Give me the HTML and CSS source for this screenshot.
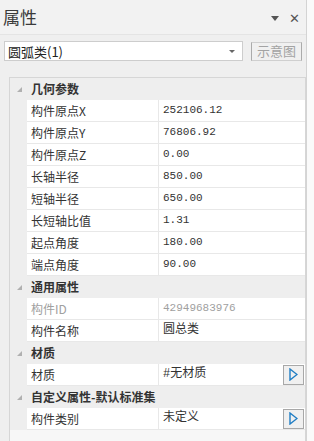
FILE: index.html
```html
<!DOCTYPE html>
<html lang="zh-CN">
<head>
    <meta charset="UTF-8">
    <meta name="viewport" content="width=device-width, initial-scale=1.0">
    <title>属性</title>
    <link rel="stylesheet" href="styles.css">
</head>
<body>
    <div class="panel">
        <div class="titlebar">
            <span class="title">属性</span>
            <span class="pin"></span>
            <span class="close">✕</span>
        </div>

        <div class="toolbar">
            <div class="combo">
                <span>圆弧类(1)</span>
                <span class="arrow"></span>
            </div>
            <button class="btn" disabled>示意图</button>
        </div>

        <div class="grid">
            <div class="row cat"><span class="gutter"><i class="tri"></i></span><span class="cell span">几何参数</span></div>
            <div class="row"><span class="gutter"></span><span class="cell label">构件原点X</span><span class="cell value">252106.12</span></div>
            <div class="row"><span class="gutter"></span><span class="cell label">构件原点Y</span><span class="cell value">76806.92</span></div>
            <div class="row"><span class="gutter"></span><span class="cell label">构件原点Z</span><span class="cell value">0.00</span></div>
            <div class="row"><span class="gutter"></span><span class="cell label">长轴半径</span><span class="cell value">850.00</span></div>
            <div class="row"><span class="gutter"></span><span class="cell label">短轴半径</span><span class="cell value">650.00</span></div>
            <div class="row"><span class="gutter"></span><span class="cell label">长短轴比值</span><span class="cell value">1.31</span></div>
            <div class="row"><span class="gutter"></span><span class="cell label">起点角度</span><span class="cell value">180.00</span></div>
            <div class="row"><span class="gutter"></span><span class="cell label">端点角度</span><span class="cell value">90.00</span></div>

            <div class="row cat"><span class="gutter"><i class="tri"></i></span><span class="cell span">通用属性</span></div>
            <div class="row disabled"><span class="gutter"></span><span class="cell label">构件ID</span><span class="cell value">42949683976</span></div>
            <div class="row"><span class="gutter"></span><span class="cell label">构件名称</span><span class="cell value text">圆总类</span></div>

            <div class="row cat"><span class="gutter"><i class="tri"></i></span><span class="cell span">材质</span></div>
            <div class="row"><span class="gutter"></span><span class="cell label">材质</span>
                <span class="cell value text"><span>#无材质</span><span class="pick"><svg width="9" height="13" viewBox="0 0 9 13"><polygon points="1,1 8,6.5 1,12" fill="none" stroke="#1f7dc4" stroke-width="1.4"/></svg></span></span>
            </div>

            <div class="row cat"><span class="gutter"><i class="tri"></i></span><span class="cell span">自定义属性-默认标准集</span></div>
            <div class="row"><span class="gutter"></span><span class="cell label">构件类别</span>
                <span class="cell value text"><span>未定义</span><span class="pick"><svg width="9" height="13" viewBox="0 0 9 13"><polygon points="1,1 8,6.5 1,12" fill="none" stroke="#1f7dc4" stroke-width="1.4"/></svg></span></span>
            </div>
        </div>
    </div>
</body>
</html>
```

FILE: styles.css
```css
body {
    margin: 0;
    background: #fafafa;
    font-family: "Noto Sans CJK SC", "Noto Sans", sans-serif;
    color: #333;
}
.panel {
    width: 306px;
    height: 441px;
    background: #efefef;
    border-right: 1px solid #d4d4d4;
    display: flex;
    flex-direction: column;
    overflow: hidden;
}
.titlebar {
    height: 35px;
    box-sizing: border-box;
    border-bottom: 1px solid #e4e4e4;
    background: #f2f2f2;
    display: flex;
    align-items: center;
    padding: 0 6px 0 3px;
}
.title {
    font-size: 17px;
    color: #3a3a3a;
    flex: 1;
    line-height: 20px;
    margin-top: -1px;
}
.pin {
    width: 0;
    height: 0;
    border-left: 4px solid transparent;
    border-right: 4px solid transparent;
    border-top: 5px solid #555;
    margin-right: 10px;
    margin-top: 2px;
}
.close {
    font-size: 13px;
    color: #555;
    margin-top: 1px;
}
.toolbar {
    display: flex;
    gap: 8px;
    padding: 6px 0 0 4px;
    align-items: center;
}
.combo {
    width: 239px;
    height: 20px;
    box-sizing: border-box;
    background: #fff;
    border: 1px solid #cdcdcd;
    display: flex;
    align-items: center;
    justify-content: space-between;
    padding: 0 7px 0 3px;
    font-size: 13px;
    color: #222;
}
.arrow {
    width: 0;
    height: 0;
    border-left: 3px solid transparent;
    border-right: 3px solid transparent;
    border-top: 3px solid #666;
}
.btn {
    width: 51px;
    height: 19px;
    box-sizing: border-box;
    background: #f0f0f0;
    border: 1px solid #ababab;
    border-top-color: #cfcfcf;
    border-bottom-color: #cfcfcf;
    font-family: "Noto Sans CJK SC", sans-serif;
    font-size: 13px;
    color: #a3a3a3;
    padding: 0;
    line-height: 16px;
}
.grid {
    flex: 1;
    margin: 16px 0 0 9px;
    width: 297px;
    box-sizing: border-box;
    border: 1px solid #d6d6d6;
    border-bottom: none;
    background: #f7f7f7;
}
.row {
    display: grid;
    grid-template-columns: 17px 132px 1fr;
    height: 22px;
}
.gutter {
    background: #eeeeee;
    display: flex;
    align-items: center;
    padding-left: 7px;
}
.tri {
    width: 0;
    height: 0;
    border-left: 5px solid transparent;
    border-bottom: 5px solid #b0b0b0;
    margin-top: 1px;
}
.cell {
    font-size: 12px;
    line-height: 21px;
    padding-left: 4px;
    white-space: nowrap;
    overflow: hidden;
}
.label,
.value {
    background: #fff;
    border-bottom: 1px solid #e8e8e8;
}
.label {
    border-right: 1px solid #e8e8e8;
}
.value {
    font-family: "Liberation Mono", "Noto Sans CJK SC", monospace;
    font-size: 11px;
    display: flex;
    align-items: center;
    justify-content: space-between;
}
.value.text {
    font-size: 12px;
}
.cat .cell {
    background: #eeeeee;
    font-weight: bold;
    line-height: 22px;
}
.span {
    grid-column: 2 / 4;
}
.disabled .cell {
    color: #a0a0a0;
}
.pick {
    width: 21px;
    height: 20px;
    box-sizing: border-box;
    border: 1px solid #a8a8a8;
    background: #f0f0f0;
    display: flex;
    align-items: center;
    justify-content: center;
    margin-right: 1px;
}
```
